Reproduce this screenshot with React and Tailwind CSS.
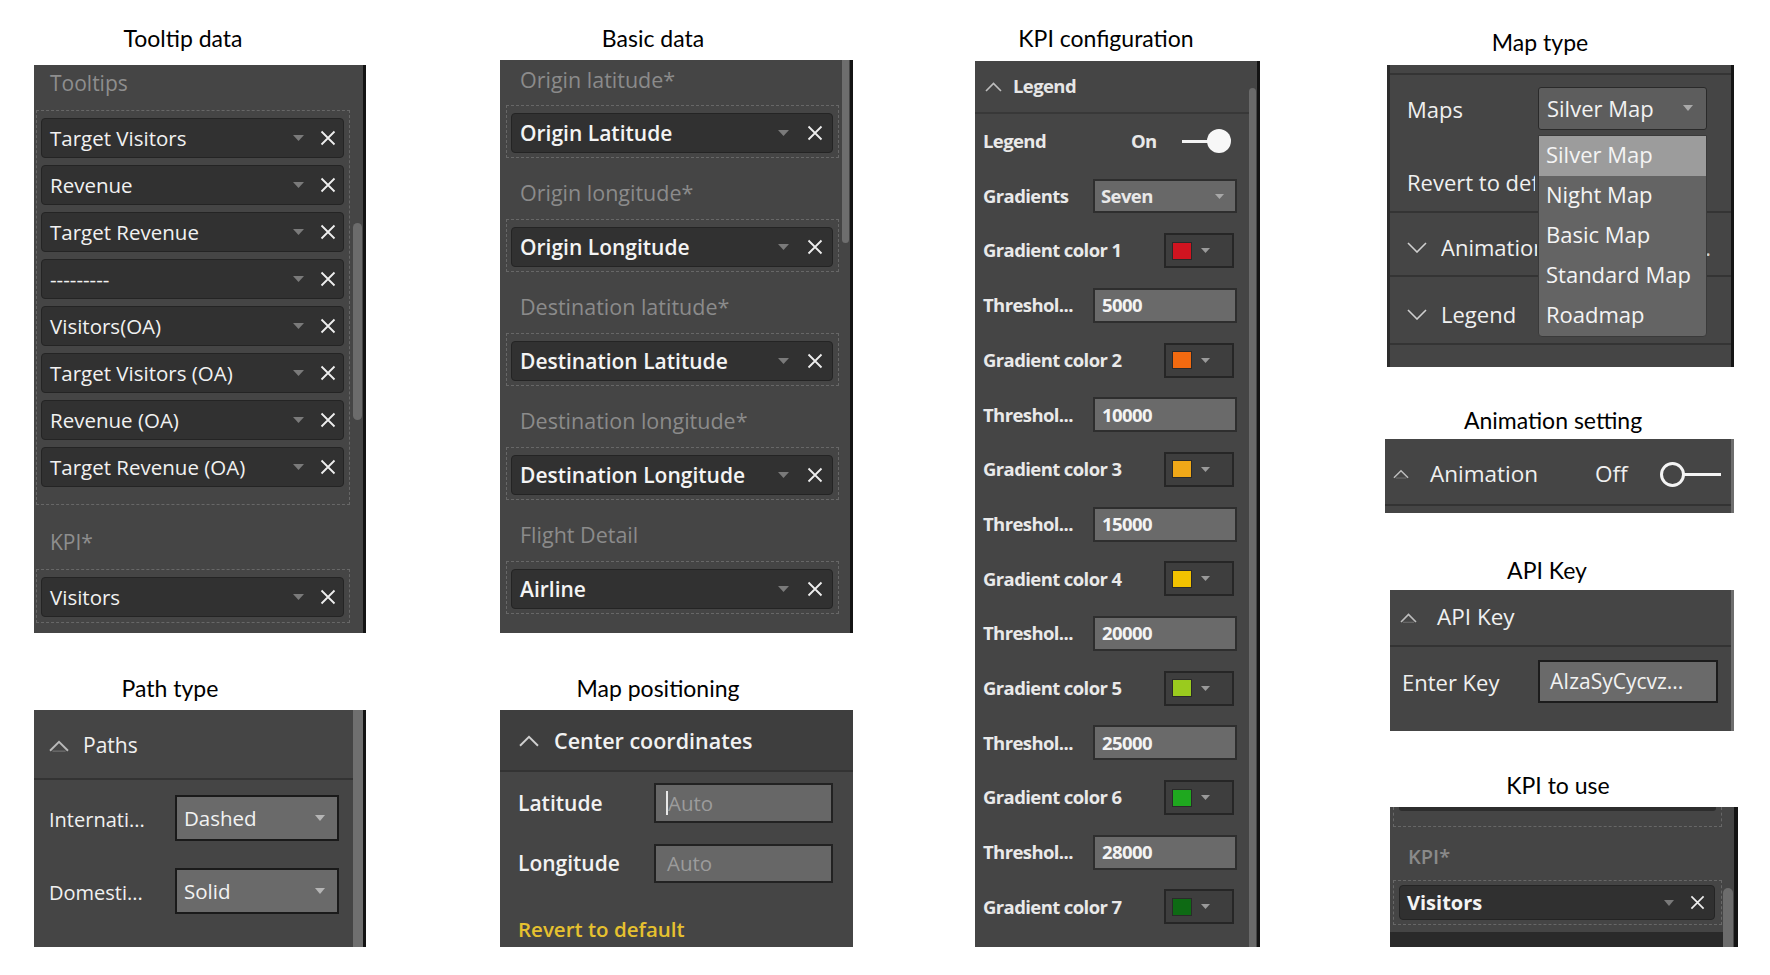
import React from "react";

const Tri = ({ w = 11, h = 6, c = "#7a7a7a" }) => (
  <svg width={w} height={h} viewBox={`0 0 ${w} ${h}`} className="shrink-0">
    <path d={`M0 0H${w}L${w / 2} ${h}Z`} fill={c} />
  </svg>
);

const XIcon = ({ s = 16, c = "#eeeeee", sw = 1.8 }) => (
  <svg width={s} height={s} viewBox="0 0 16 16" className="shrink-0">
    <path d="M1.5 1.5L14.5 14.5M14.5 1.5L1.5 14.5" stroke={c} strokeWidth={sw} />
  </svg>
);

const ChevUp = ({ w = 17, h = 10, c = "#c4c4c4", shade = false }) => (
  <svg width={w} height={h} viewBox="0 0 17 10" className="shrink-0">
    {shade && <path d="M3 9.3H14" stroke="#6a6a6a" strokeWidth="1.2" />}
    <path d="M1 9L8.5 1.5L16 9" fill="none" stroke={c} strokeWidth="1.6" />
  </svg>
);

const ChevDown = ({ w = 20, h = 11, c = "#cfcfcf" }) => (
  <svg width={w} height={h} viewBox="0 0 20 11" className="shrink-0">
    <path d="M1 1L10 10L19 1" fill="none" stroke={c} strokeWidth="1.6" />
  </svg>
);

function Title({ children, className }) {
  return (
    <div
      className={
        "flex shrink-0 items-center justify-center font-['Lato',sans-serif] text-[23px] leading-none text-black " +
        className
      }
    >
      {children}
    </div>
  );
}

function ToolChip({ text }) {
  return (
    <div className="flex h-[40px] items-center rounded-[4px] border border-[#242424] bg-[#313131] pl-[8px] pr-[7px]">
      <span className="text-[20.5px] font-medium leading-none text-[#f1f1f1]">{text}</span>
      <div className="ml-auto flex items-center gap-[16px]">
        <Tri />
        <XIcon />
      </div>
    </div>
  );
}

function BasicChip({ text }) {
  return (
    <div className="flex h-[40px] items-center rounded-[4px] border border-[#242424] bg-[#313131] pl-[8px] pr-[9px]">
      <span className="text-[21px] font-semibold leading-none text-[#f4f4f4]">{text}</span>
      <div className="ml-auto flex items-center gap-[18px]">
        <Tri />
        <XIcon />
      </div>
    </div>
  );
}

function TooltipPanel() {
  const items = [
    "Target Visitors",
    "Revenue",
    "Target Revenue",
    "---------",
    "Visitors(OA)",
    "Target Visitors (OA)",
    "Revenue (OA)",
    "Target Revenue (OA)",
  ];
  return (
    <div className="flex h-[568px] w-[332px] shrink-0 bg-[#454545]">
      <div className="flex-1 px-[2px]">
        <div className="mb-[14px] mt-[5px] h-[26px] pl-[14px] text-[21px] leading-[26px] text-[#8e8e8e]">
          Tooltips
        </div>
        <div className="flex flex-col gap-[7px] border border-dashed border-[#676767] pb-[17px] pl-[4px] pr-[5px] pt-[7px]">
          {items.map((t) => (
            <ToolChip key={t} text={t} />
          ))}
        </div>
        <div className="mb-[14px] mt-[24px] h-[26px] pl-[14px] text-[21px] leading-[26px] text-[#8e8e8e]">
          KPI*
        </div>
        <div className="border border-dashed border-[#676767] pb-[5px] pl-[4px] pr-[5px] pt-[7px]">
          <ToolChip text="Visitors" />
        </div>
      </div>
      <div className="flex w-[11px] flex-col">
        <div className="ml-[1px] mt-[158px] h-[197px] w-[9px] rounded-full bg-[#6b6b6b]" />
      </div>
      <div className="w-[3px] bg-[#141414]" />
    </div>
  );
}

function BasicPanel() {
  const groups = [
    ["Origin latitude*", "Origin Latitude"],
    ["Origin longitude*", "Origin Longitude"],
    ["Destination latitude*", "Destination Latitude"],
    ["Destination longitude*", "Destination Longitude"],
    ["Flight Detail", "Airline"],
  ];
  return (
    <div className="flex h-[573px] w-[353px] shrink-0 bg-[#454545]">
      <div className="flex-1 pl-[6px] pr-[2px]">
        {groups.map(([label, chip], i) => (
          <div key={label}>
            <div
              className={
                i === 0
                  ? "mb-[12px] mt-[7px] h-[26px] pl-[14px] text-[21.5px] font-medium leading-[26px] text-[#8b8b8b]"
                  : "mb-[13px] mt-[22px] h-[26px] pl-[14px] text-[21.5px] font-medium leading-[26px] text-[#8b8b8b]"
              }
            >
              {label}
            </div>
            <div className="border border-dashed border-[#676767] pb-[4px] pl-[4px] pr-[5px] pt-[7px]">
              <BasicChip text={chip} />
            </div>
          </div>
        ))}
      </div>
      <div className="flex w-[9px] flex-col">
        <div className="ml-[1px] h-[183px] w-[7px] rounded-b-full bg-[#6e6e6e]" />
      </div>
      <div className="w-[3px] bg-[#141414]" />
    </div>
  );
}

function PathPanel() {
  const Drop = ({ v }) => (
    <div className="ml-auto mr-[14px] flex h-[46px] w-[164px] items-center border-2 border-[#1a1a1a] bg-[#6a6a6a] pl-[7px] pr-[12px]">
      <span className="text-[20.5px] font-medium leading-none text-[#f2f2f2]">{v}</span>
      <div className="ml-auto">
        <Tri w={10} h={6} c="#b5b5b5" />
      </div>
    </div>
  );
  return (
    <div className="flex h-[237px] w-[332px] shrink-0 bg-[#454545]">
      <div className="flex-1">
        <div className="flex h-[70px] items-center border-b-2 border-[#333333] pl-[14px] pt-[3px]">
          <ChevUp w={22} h={12} c="#b8b8b8" shade />
          <span className="ml-[13px] text-[21px] font-medium leading-none text-[#f0f0f0]">Paths</span>
        </div>
        <div className="mt-[15px] flex items-center pl-[15px]">
          <span className="pt-[3px] text-[20px] font-medium leading-none text-[#f0f0f0]">Internati...</span>
          <Drop v="Dashed" />
        </div>
        <div className="mt-[27px] flex items-center pl-[15px]">
          <span className="pt-[3px] text-[20px] font-medium leading-none text-[#f0f0f0]">Domesti...</span>
          <Drop v="Solid" />
        </div>
      </div>
      <div className="w-[10px] bg-[#6f6f6f]" />
      <div className="w-[3px] bg-[#141414]" />
    </div>
  );
}

function MapPosPanel() {
  return (
    <div className="flex h-[237px] w-[353px] shrink-0 flex-col bg-[#454545]">
      <div className="flex h-[62px] items-center border-b-2 border-[#333333] bg-[#3e3e3e] pl-[18px] pt-[2px]">
        <ChevUp w={22} h={12} c="#cfcfcf" />
        <span className="ml-[14px] text-[21.5px] font-semibold leading-none text-[#f2f2f2]">
          Center coordinates
        </span>
      </div>
      <div className="mt-[11px] flex items-center pl-[18px]">
        <span className="w-[136px] text-[21px] font-semibold leading-none text-[#f2f2f2]">Latitude</span>
        <div className="flex h-[40px] w-[179px] items-center border-2 border-[#222222] bg-[#676767] pl-[10px]">
          <div className="h-[24px] w-[2px] bg-[#e8e8e8]" />
          <span className="text-[20.5px] leading-none text-[#9c9c9c]">Auto</span>
        </div>
      </div>
      <div className="mt-[21px] flex items-center pl-[18px]">
        <span className="w-[136px] text-[21px] font-semibold leading-none text-[#f2f2f2]">Longitude</span>
        <div className="flex h-[39px] w-[179px] items-center border-2 border-[#222222] bg-[#676767] pl-[11px]">
          <span className="text-[20.5px] leading-none text-[#9c9c9c]">Auto</span>
        </div>
      </div>
      <div className="mt-[33px] h-[26px] pl-[18px] text-[20.5px] font-semibold leading-[26px] text-[#e6c12f]">
        Revert to default
      </div>
    </div>
  );
}

function KpiPanel() {
  const rows = [
    { t: "c", l: "Gradient color 1", c: "#d01420" },
    { t: "i", v: "5000" },
    { t: "c", l: "Gradient color 2", c: "#f26a10" },
    { t: "i", v: "10000" },
    { t: "c", l: "Gradient color 3", c: "#f0a818" },
    { t: "i", v: "15000" },
    { t: "c", l: "Gradient color 4", c: "#f2c200" },
    { t: "i", v: "20000" },
    { t: "c", l: "Gradient color 5", c: "#9acb1e" },
    { t: "i", v: "25000" },
    { t: "c", l: "Gradient color 6", c: "#1fa81f" },
    { t: "i", v: "28000" },
    { t: "c", l: "Gradient color 7", c: "#0e6a14" },
  ];
  const rowCls =
    "flex h-[54.7px] items-center pl-[8px] text-[18.5px] font-bold leading-none tracking-[-0.6px] text-[#e9e9e9]";
  return (
    <div className="flex h-[886px] w-[285px] shrink-0 bg-[#454545]">
      <div className="flex-1">
        <div className="flex h-[53px] items-center border-b-2 border-[#383838] pl-[10px]">
          <ChevUp w={17} h={10} c="#bdbdbd" />
          <span className="ml-[11px] text-[18.5px] font-bold leading-none tracking-[-0.6px] text-[#e6e6e6]">
            Legend
          </span>
        </div>
        <div className={rowCls}>
          <span className="w-[148px]">Legend</span>
          <span>On</span>
          <div className="ml-[25px] h-[3px] w-[27px] bg-[#f4f4f4]" />
          <div className="-ml-[2px] h-[24px] w-[24px] rounded-full bg-[#f7f7f7]" />
        </div>
        <div className={rowCls}>
          <span>Gradients</span>
          <div className="ml-auto mr-[12px] flex h-[34px] w-[144px] items-center border-2 border-[#2e2e2e] bg-[#686868] pl-[6px] pr-[11px]">
            <span>Seven</span>
            <div className="ml-auto">
              <Tri w={9} h={5} c="#a8a8a8" />
            </div>
          </div>
        </div>
        {rows.map((r, i) =>
          r.t === "c" ? (
            <div key={i} className={rowCls}>
              <span>{r.l}</span>
              <div className="ml-auto mr-[15px] flex h-[35px] w-[70px] items-center border-2 border-[#262626] bg-[#3e3e3e] pl-[6px]">
                <div className="h-[18px] w-[20px] border border-[#2a2a2a]" style={{ backgroundColor: r.c }} />
                <div className="ml-[9px]">
                  <Tri w={9} h={5} c="#9a9a9a" />
                </div>
              </div>
            </div>
          ) : (
            <div key={i} className={rowCls}>
              <span>Threshol...</span>
              <div className="ml-auto mr-[12px] flex h-[35px] w-[144px] items-center border-2 border-[#2e2e2e] bg-[#6a6a6a] pl-[7px]">
                <span className="text-[#f3f3f3]">{r.v}</span>
              </div>
            </div>
          )
        )}
      </div>
      <div className="flex w-[8px] flex-col">
        <div className="mt-[27px] w-[7px] flex-1 rounded-t-full bg-[#6a6a6a]" />
      </div>
      <div className="w-[3px] bg-[#141414]" />
    </div>
  );
}

function MapTypePanel() {
  const opts = ["Silver Map", "Night Map", "Basic Map", "Standard Map", "Roadmap"];
  return (
    <div className="relative ml-[2px] flex h-[302px] w-[347px] shrink-0 border-l-[3px] border-r-[3px] border-l-[#2c2c2c] border-r-[#151515] bg-[#454545]">
      <div className="flex flex-1 flex-col">
        <div className="h-[10px] border-b-2 border-[#343434]" />
        <div className="h-[138px] border-b-2 border-[#343434] pl-[17px]">
          <div className="mt-[12px] flex items-center">
            <span className="w-[131px] text-[22px] font-medium leading-none text-[#f0f0f0]">Maps</span>
            <div className="flex h-[43px] w-[169px] items-center rounded-[3px] border border-[#2a2a2a] bg-[#5d5d5d] pb-[2px] pl-[8px] pr-[13px]">
              <span className="text-[22px] font-medium leading-none text-[#f2f2f2]">Silver Map</span>
              <div className="ml-auto">
                <Tri w={10} h={6} c="#a9a9a9" />
              </div>
            </div>
          </div>
          <div className="mt-[37px] h-[30px] w-[128px] overflow-hidden whitespace-nowrap text-[22px] font-medium leading-[30px] text-[#f0f0f0]">
            Revert to default
          </div>
        </div>
        <div className="flex h-[64px] items-center border-b-2 border-[#343434] pl-[17px] pt-[6px]">
          <ChevDown />
          <span className="ml-[14px] w-[96px] overflow-hidden whitespace-nowrap text-[22px] font-medium leading-none text-[#f0f0f0]">
            Animation
          </span>
          <span className="ml-auto mr-[20px] text-[22px] leading-none text-[#d0d0d0]">.</span>
        </div>
        <div className="flex h-[68px] items-center border-b-2 border-[#343434] pl-[17px] pt-[8px]">
          <ChevDown />
          <span className="ml-[14px] text-[22px] font-medium leading-none text-[#f0f0f0]">Legend</span>
        </div>
      </div>
      <div className="absolute left-[148px] top-[70px] flex w-[169px] flex-col overflow-hidden rounded-b-[4px] border border-[#3a3a3a] bg-[#646464]">
        {opts.map((o, i) => (
          <div
            key={o}
            className={
              i === 0
                ? "flex h-[40px] items-center bg-[#9c9c9c] pb-[5px] pl-[7px] text-[22px] font-medium leading-none text-[#f4f4f4]"
                : "flex h-[40px] items-center pb-[5px] pl-[7px] text-[22px] font-medium leading-none text-[#f4f4f4]"
            }
          >
            {o}
          </div>
        ))}
      </div>
    </div>
  );
}

function AnimationPanel() {
  return (
    <div className="flex h-[74px] w-[349px] shrink-0 flex-col border-r-[3px] border-r-[#6e6e6e] bg-[#454545]">
      <div className="flex h-[67px] items-center border-b-2 border-[#333333] pl-[8px] pt-[5px]">
        <ChevUp w={16} h={10} c="#bdbdbd" shade />
        <span className="ml-[21px] w-[165px] text-[22.5px] font-medium leading-none text-[#f0f0f0]">Animation</span>
        <span className="text-[22.5px] font-medium leading-none text-[#f0f0f0]">Off</span>
        <div className="ml-[32px] h-[25px] w-[25px] rounded-full border-[3px] border-[#f4f4f4]" />
        <div className="-ml-[1px] h-[3px] w-[37px] bg-[#f4f4f4]" />
      </div>
    </div>
  );
}

function ApiPanel() {
  return (
    <div className="ml-[5px] flex h-[141px] w-[344px] shrink-0 flex-col border-r-[3px] border-r-[#6e6e6e] bg-[#454545]">
      <div className="flex h-[57px] items-center border-b-2 border-[#333333] pl-[10px]">
        <ChevUp w={17} h={10} c="#bdbdbd" shade />
        <span className="ml-[20px] text-[22.5px] font-medium leading-none text-[#f0f0f0]">API Key</span>
      </div>
      <div className="mt-[13px] flex items-center pl-[12px]">
        <span className="w-[136px] text-[22px] font-medium leading-none text-[#f0f0f0]">Enter Key</span>
        <div className="flex h-[43px] w-[180px] items-center border-2 border-[#1c1c1c] bg-[#6a6a6a] pl-[10px]">
          <span className="text-[21px] font-medium leading-none text-[#f2f2f2]">AIzaSyCycvz...</span>
        </div>
      </div>
    </div>
  );
}

function KpiUsePanel() {
  return (
    <div className="ml-[5px] flex h-[140px] w-[348px] shrink-0 bg-[#454545]">
      <div className="flex flex-1 flex-col">
        <div className="ml-[3px] mr-[1px] h-[20px] border-x border-b border-dashed border-[#676767] px-[5px]">
          <div className="h-[4px] rounded-b-[3px] bg-[#2d2d2d]" />
        </div>
        <div className="mb-[10px] mt-[17px] h-[26px] pl-[18px] text-[20px] font-semibold leading-[26px] text-[#8a8a8a]">
          KPI*
        </div>
        <div className="ml-[3px] mr-[1px] border border-dashed border-[#676767] pb-[4px] pl-[5px] pr-[6px] pt-[4px]">
          <div className="flex h-[35px] items-center rounded-[4px] border border-[#242424] bg-[#303030] pl-[7px] pr-[9px]">
            <span className="text-[20px] font-bold leading-none text-[#f4f4f4]">Visitors</span>
            <div className="ml-auto flex items-center gap-[16px]">
              <Tri w={10} h={6} />
              <XIcon s={15} />
            </div>
          </div>
        </div>
        <div className="mt-[7px] flex-1 bg-[#2a2a2a]" />
      </div>
      <div className="flex w-[11px] flex-col">
        <div className="mt-[81px] w-[10px] flex-1 rounded-t-full bg-[#6c6c6c]" />
      </div>
      <div className="w-[4px] bg-[#141414]" />
    </div>
  );
}

export default function App() {
  return (
    <div className="flex h-[975px] w-[1770px] overflow-hidden bg-white pl-[34px] font-['Open_Sans',sans-serif]">
      <div className="flex w-[332px] shrink-0 flex-col">
        <Title className="h-[65px] pr-[34px] pt-[11px]">Tooltip data</Title>
        <TooltipPanel />
        <Title className="h-[77px] pr-[60px] pt-[33px]">Path type</Title>
        <PathPanel />
      </div>
      <div className="ml-[134px] flex w-[353px] shrink-0 flex-col">
        <Title className="h-[60px] pr-[47px] pt-[16px]">Basic data</Title>
        <BasicPanel />
        <Title className="h-[77px] pr-[37px] pt-[33px]">Map positioning</Title>
        <MapPosPanel />
      </div>
      <div className="ml-[122px] flex w-[285px] shrink-0 flex-col">
        <Title className="h-[61px] pr-[23px] pt-[15px]">KPI configuration</Title>
        <KpiPanel />
      </div>
      <div className="ml-[125px] flex w-[355px] shrink-0 flex-col">
        <Title className="h-[65px] pr-[45px] pt-[19px]">Map type</Title>
        <MapTypePanel />
        <Title className="h-[72px] pr-[19px] pt-[35px]">Animation setting</Title>
        <AnimationPanel />
        <Title className="h-[77px] pr-[31px] pt-[37px]">API Key</Title>
        <ApiPanel />
        <Title className="h-[76px] pr-[9px] pt-[32px]">KPI to use</Title>
        <KpiUsePanel />
      </div>
    </div>
  );
}
